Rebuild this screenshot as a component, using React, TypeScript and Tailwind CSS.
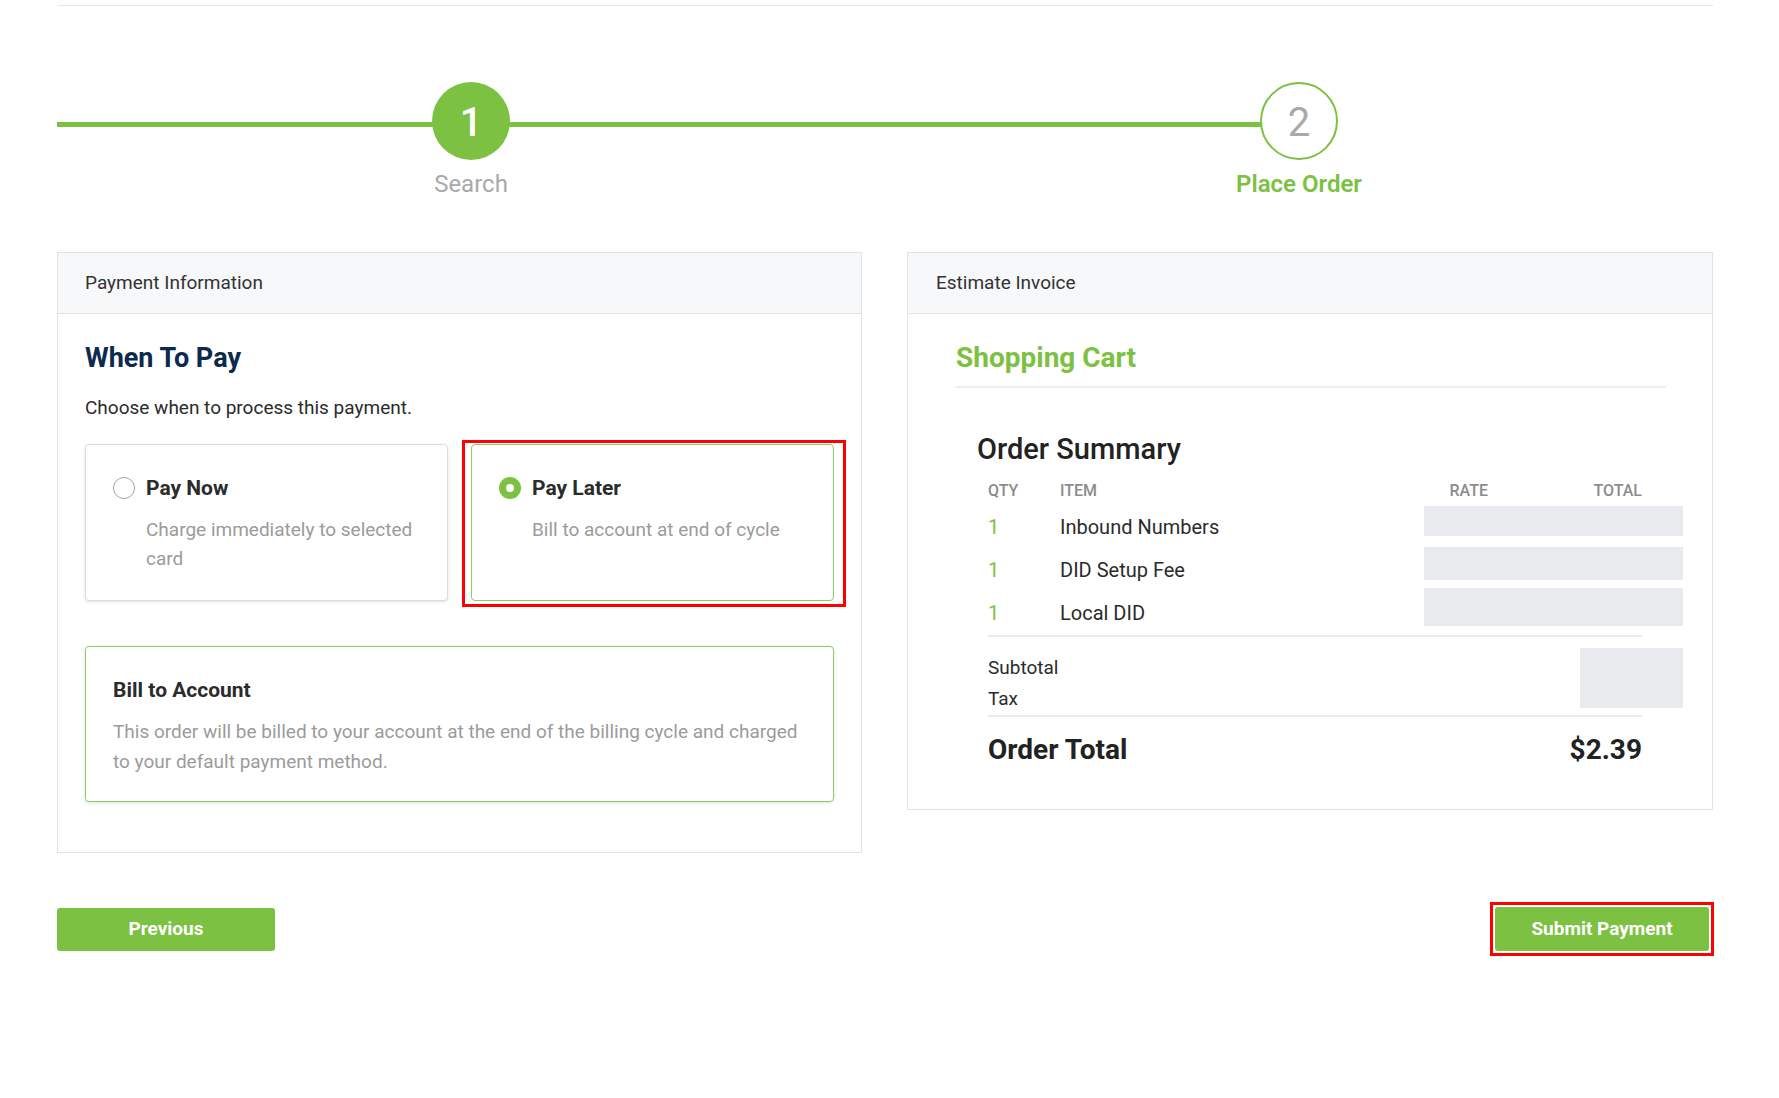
import React from "react";

function Radio({ checked }: { checked: boolean }) {
  if (checked) {
    return (
      <span className="w-[22px] h-[22px] rounded-full bg-[#7cc142] flex items-center justify-center shrink-0">
        <span className="w-[8px] h-[8px] rounded-full bg-white" />
      </span>
    );
  }
  return <span className="w-[22px] h-[22px] rounded-full border-[1.5px] border-[#9ba6b6] bg-white shrink-0" />;
}

function PayOption({ title, desc, checked }: { title: string; desc: string; checked: boolean }) {
  return (
    <div
      className={
        checked
          ? "h-full bg-white rounded-[4px] border border-[#8fcb5e] pl-[27px] pr-[24px] pt-[29px] pb-[27px] flex gap-[11px]"
          : "h-full bg-white rounded-[4px] border border-[#dcdcdc] shadow-[0_1px_3px_rgba(0,0,0,0.12)] pl-[27px] pr-[24px] pt-[29px] pb-[27px] flex gap-[11px]"
      }
    >
      <div className="h-[28px] flex items-center">
        <Radio checked={checked} />
      </div>
      <div className="flex flex-col">
        <div className="text-[21px] leading-[28px] font-bold text-[#2b2b2b]">{title}</div>
        <div className="mt-[13px] text-[19px] leading-[29px] text-[#9b9b9b]">{desc}</div>
      </div>
    </div>
  );
}

const rows = [
  { qty: 1, item: "Inbound Numbers", h: "h-[30px]" },
  { qty: 1, item: "DID Setup Fee", h: "h-[33px]" },
  { qty: 1, item: "Local DID", h: "h-[38px]" },
];

export default function App() {
  return (
    <div className="min-h-screen w-full bg-white font-[Roboto,Arial,sans-serif] text-[#2b2b2b]">
      <div className="w-[1656px] ml-[57px] pt-[5px]">
        <div className="h-px bg-[#e6e6e6]" />

        {/* STEPPER */}
        <div className="relative grid grid-cols-2">
          <div className="absolute left-0 top-[116px] h-[5px] w-3/4 bg-[#7cc142]" />
          <div className="relative flex flex-col items-center">
            <div className="mt-[76px] w-[78px] h-[78px] rounded-full bg-[#7cc142] flex items-center justify-center pt-[3px] text-white text-[40px] font-medium">
              1
            </div>
            <div className="mt-[10px] text-[24px] leading-[28px] text-[#a9a9a9]">Search</div>
          </div>
          <div className="relative flex flex-col items-center">
            <div className="mt-[76px] w-[78px] h-[78px] rounded-full border-2 border-[#7cc142] bg-white flex items-center justify-center pt-[3px] text-[#a9a9a9] text-[40px]">
              2
            </div>
            <div className="mt-[10px] text-[24px] leading-[28px] font-semibold text-[#7cc142]">Place Order</div>
          </div>
        </div>

        {/* CARDS */}
        <div className="mt-[54px] grid grid-cols-[805px_806px] gap-[45px] items-start">
          {/* Payment information */}
          <div className="border border-[#e2e2e2] bg-white">
            <div className="h-[61px] bg-[#f7f8fa] border-b border-[#e2e2e2] flex items-center px-[27px] text-[19px] text-[#333]">
              Payment Information
            </div>
            <div className="px-[27px] pt-[28px] pb-[50px]">
              <h2 className="text-[27px] leading-[32px] font-bold text-[#0b2a4e]">When To Pay</h2>
              <p className="mt-[20px] text-[19px] leading-[28px] text-[#2b2b2b]">Choose when to process this payment.</p>

              <div className="mt-[22px] grid grid-cols-2 gap-[23px]">
                <PayOption title="Pay Now" desc="Charge immediately to selected card" checked={false} />
                <div className="relative">
                  <PayOption title="Pay Later" desc="Bill to account at end of cycle" checked={true} />
                  <div className="absolute -left-[9px] -top-[4px] -right-[12px] -bottom-[6px] border-[3px] border-[#ff0000] pointer-events-none" />
                </div>
              </div>

              <div className="mt-[45px] rounded-[4px] border border-[#8fcb5e] shadow-[0_1px_4px_rgba(0,0,0,0.12)] pl-[27px] pr-[18px] pt-[29px] pb-[25px]">
                <div className="text-[21px] leading-[28px] font-bold text-[#2b2b2b]">Bill to Account</div>
                <p className="mt-[13px] text-[19px] leading-[29.5px] text-[#9b9b9b]">
                  This order will be billed to your account at the end of the billing cycle and charged to your default payment method.
                </p>
              </div>
            </div>
          </div>

          {/* Estimate invoice */}
          <div className="border border-[#e2e2e2] bg-white">
            <div className="h-[61px] bg-[#f7f8fa] border-b border-[#e2e2e2] flex items-center px-[28px] text-[19px] text-[#333]">
              Estimate Invoice
            </div>
            <div className="pl-[48px] pr-[46px] pt-[28px] pb-[42px]">
              <h2 className="text-[28px] leading-[32px] font-bold text-[#7cc142] pb-[12px] border-b-2 border-[#eeeeee]">
                Shopping Cart
              </h2>

              <h3 className="mt-[44px] ml-[21px] text-[29px] leading-[34px] font-medium text-[#222]">Order Summary</h3>

              <div className="ml-[32px] w-[654px]">
                <div className="mt-[15px] flex text-[16px] leading-[20px] font-medium text-[#8c8c8c] uppercase">
                  <div className="w-[72px]">Qty</div>
                  <div className="flex-1">Item</div>
                  <div className="w-[144px]">Rate</div>
                  <div>Total</div>
                </div>

                <div className="mt-[4px]">
                  {rows.map((r) => (
                    <div key={r.item} className="h-[43px] flex items-center text-[20px]">
                      <div className="w-[72px] text-[#7cc142]">{r.qty}</div>
                      <div className="flex-1 text-[#2b2b2b]">{r.item}</div>
                      <div className={`${r.h} w-[259px] mb-[12px] -mr-[41px] bg-[#e9eaee] shrink-0`} />
                    </div>
                  ))}
                </div>

                <div className="mt-[1px] h-[2px] bg-[#ebebeb]" />

                <div className="flex items-start pb-[1px]">
                  <div className="flex-1 pt-[15px] text-[19px] leading-[31px] text-[#2b2b2b]">
                    <div>Subtotal</div>
                    <div>Tax</div>
                  </div>
                  <div className="mt-[11px] w-[103px] h-[60px] -mr-[41px] bg-[#e9eaee] shrink-0" />
                </div>

                <div className="h-[2px] bg-[#ebebeb]" />

                <div className="mt-[16px] flex justify-between text-[28px] leading-[34px] font-bold text-[#222]">
                  <span>Order Total</span>
                  <span>$2.39</span>
                </div>
              </div>
            </div>
          </div>
        </div>

        {/* BUTTONS */}
        <div className="mt-[49px] flex items-center justify-between">
          <button className="w-[218px] h-[43px] rounded-[3px] bg-[#7cc142] text-white text-[19px] font-bold">Previous</button>
          <div className="border-[3px] border-[#ff0000] p-[2px] -mr-[1px]">
            <button className="w-[214px] h-[44px] rounded-[3px] bg-[#7cc142] text-white text-[19px] font-bold">Submit Payment</button>
          </div>
        </div>
      </div>
    </div>
  );
}
